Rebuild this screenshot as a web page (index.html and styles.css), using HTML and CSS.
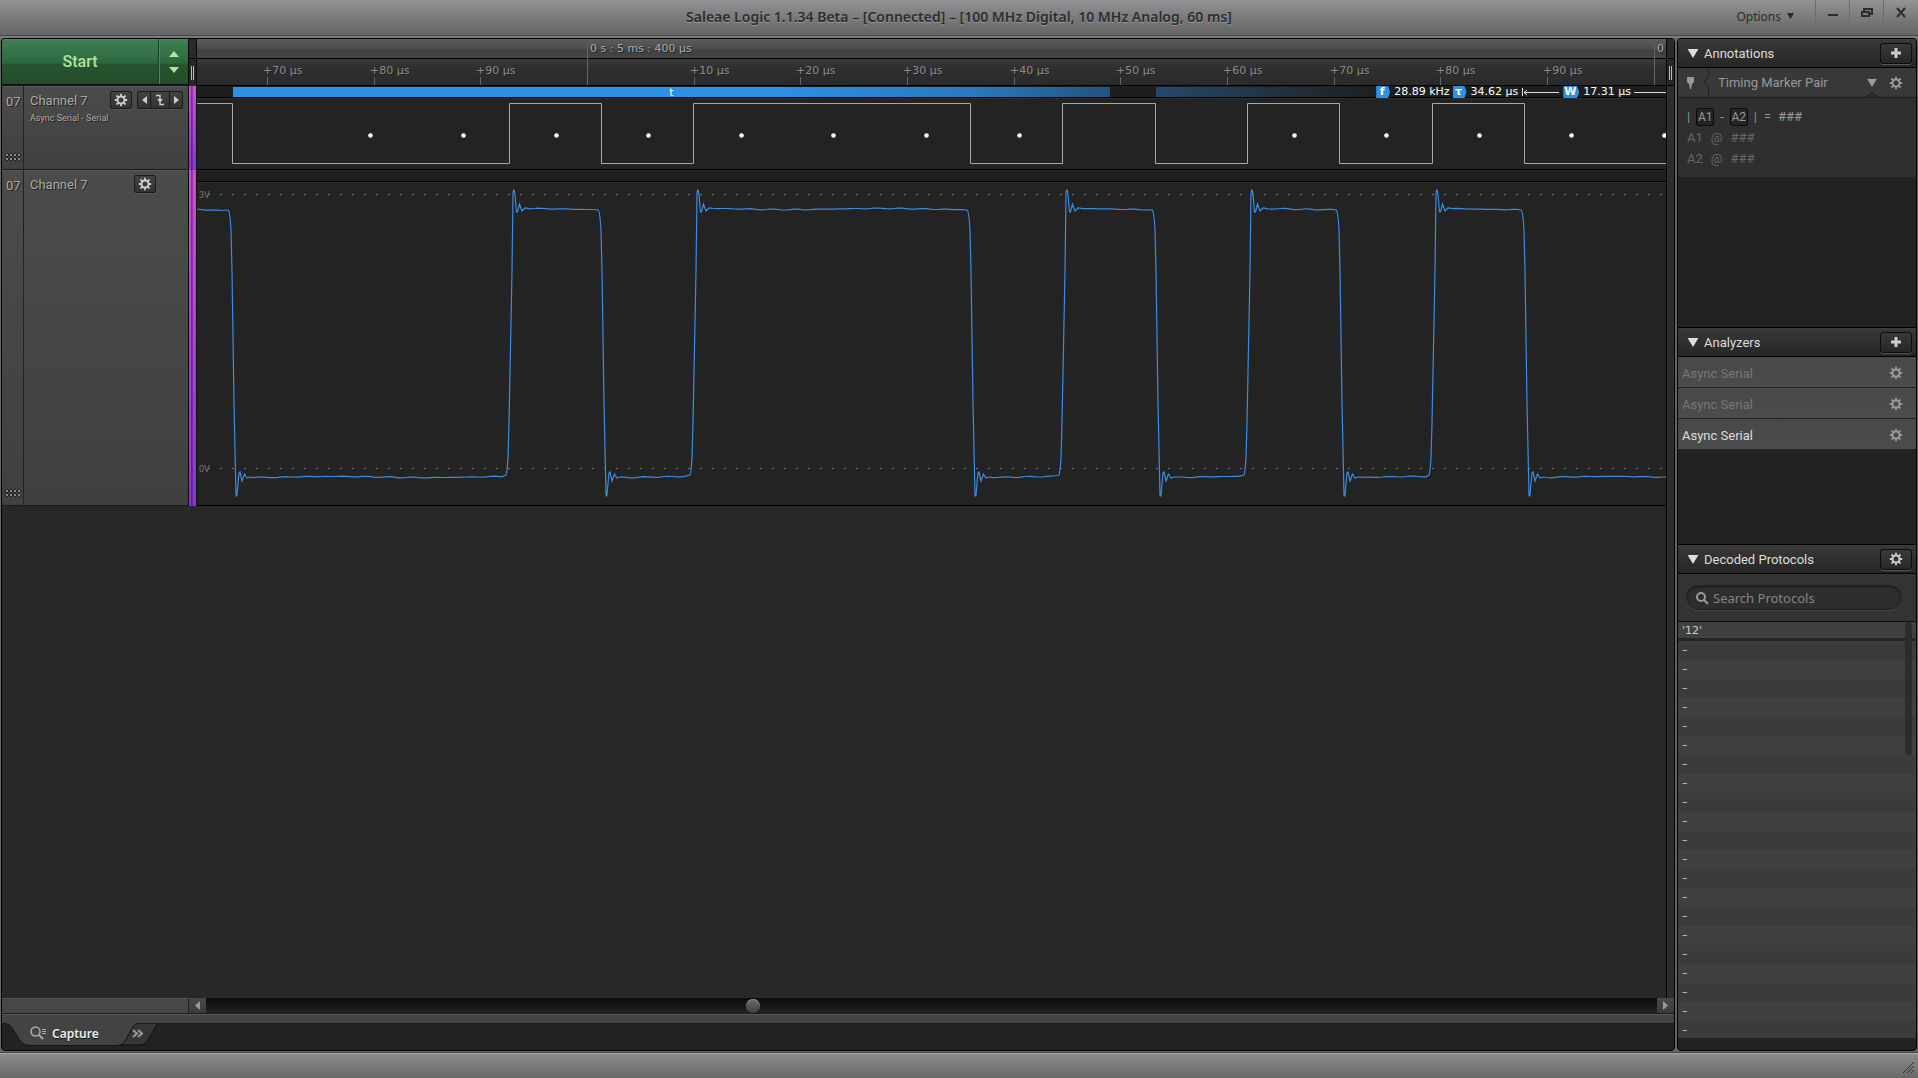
FILE: index.html
```html
<!DOCTYPE html>
<html lang="en">
<head>
  <meta charset="UTF-8">
  <title>Saleae Logic 1.1.34 Beta</title>
  <meta name="viewport" content="width=device-width, initial-scale=1">
  <link rel="stylesheet" href="styles.css">
</head>
<body>
  <svg class="defs" aria-hidden="true">
    <symbol id="gear" viewBox="0 0 14 14">
      <circle cx="7" cy="7" r="3.5" fill="none" stroke="currentColor" stroke-width="2"/>
      <path d="M7 .8v2.400M7 10.800v2.400M.8 7h2.400M10.800 7h2.400M2.500 2.500l1.800 1.800M9.700 9.700l1.800 1.800M11.500 2.500L9.700 4.300M4.300 9.700l-1.800 1.800" stroke="currentColor" stroke-width="1.800"/>
    </symbol>
    <symbol id="plus" viewBox="0 0 12 12">
      <path d="M6 1v10M1 6h10" stroke="currentColor" stroke-width="3"/>
    </symbol>
    <symbol id="down" viewBox="0 0 12 10">
      <path d="M0 0h12L6 10z" fill="currentColor"/>
    </symbol>
  </svg>

  <header class="titlebar">
    <h1>Saleae Logic 1.1.34 Beta – [Connected] – [100 MHz Digital, 10 MHz Analog, 60 ms]</h1>
    <div class="window-tools">
      <button class="options">Options <svg width="9" height="6"><use href="#down"/></svg></button>
      <button class="win-btn" aria-label="Minimize"><svg width="12" height="12"><path d="M1 7h10v2H1z" fill="currentColor"/></svg></button>
      <button class="win-btn" aria-label="Restore"><svg width="14" height="12" fill="none" stroke="currentColor" stroke-width="2"><path d="M4 4V2h8v5h-2M2 5h7v4H2z"/></svg></button>
      <button class="win-btn" aria-label="Close"><svg width="12" height="12" stroke="currentColor" stroke-width="2"><path d="M2 1l8 9M10 1L2 10"/></svg></button>
    </div>
  </header>

  <main>
    <section class="workspace">
      <div class="stage">
        <div class="tracks">
          <div class="track-head">
            <div class="start-group">
              <button class="start">Start</button>
              <button class="start-more" aria-label="Capture settings">
                <svg width="10" height="22" fill="currentColor"><path d="M0 6L5 0l5 6zM0 16h10l-5 6z"/></svg>
              </button>
            </div>
            <div class="divider head"></div>
            <svg class="ruler" id="ruler"></svg>
          </div>

          <div class="track digital">
            <div class="number">07<i class="grip"></i></div>
            <div class="channel">
              <div class="channel-top">
                <h2>Channel 7</h2>
                <button class="small-btn" aria-label="Channel settings"><svg width="14" height="14"><use href="#gear"/></svg></button>
                <div class="trigger">
                  <button aria-label="Previous edge"><svg width="5" height="8"><path d="M5 0v8L0 4z" fill="currentColor"/></svg></button>
                  <button aria-label="Trigger"><svg width="10" height="12"><path d="M1 1.500h4v9h4" fill="none" stroke="currentColor" stroke-width="1.300"/><path d="M2 5h6L5 8.500z" fill="currentColor"/></svg></button>
                  <button aria-label="Next edge"><svg width="5" height="8"><path d="M0 0v8l5-4z" fill="currentColor"/></svg></button>
                </div>
              </div>
              <p>Async Serial - Serial</p>
            </div>
            <div class="divider color"></div>
            <div class="lane">
              <div class="band">
                <span class="bubble full">t</span>
                <span class="bubble fade"></span>
                <div class="measure">
                  <b>f</b><span>28.89 kHz</span>
                  <b>τ</b><span>34.62 µs</span>
                  <svg class="arrow" width="38" height="10" stroke="#ddd" fill="none"><path d="M1.500 1v8M3 5.500h35M6 3L3 5.500 6 8"/></svg>
                  <b class="wide">W</b><span>17.31 µs</span>
                  <i></i>
                </div>
              </div>
              <svg class="plot" id="digital"></svg>
            </div>
          </div>

          <div class="track analog">
            <div class="number">07<i class="grip"></i></div>
            <div class="channel">
              <div class="channel-top">
                <h2>Channel 7</h2>
                <button class="small-btn far" aria-label="Channel settings"><svg width="14" height="14"><use href="#gear"/></svg></button>
              </div>
            </div>
            <div class="divider color"></div>
            <div class="lane">
              <div class="strip"></div>
              <svg class="plot" id="analog"></svg>
            </div>
          </div>
        </div>
        <div class="edge"><div class="edge-grip"></div></div>
      </div>

      <div class="hscroll">
        <div class="hscroll-pad"></div>
        <button aria-label="Scroll left"><svg width="5" height="9"><path d="M5 0v9L0 4.500z" fill="currentColor"/></svg></button>
        <input type="range" min="0" max="1000" value="376" aria-label="Time position">
        <button aria-label="Scroll right"><svg width="5" height="9"><path d="M0 0v9l5-4.500z" fill="currentColor"/></svg></button>
      </div>
      <div class="tab-strip"></div>
      <nav class="tabs">
        <svg class="tab-shape" width="160" height="26">
          <path d="M118 22q4-2 6-6l5-10q3-6 7-6h20l-10 17q-3 5-7 5z" fill="#353535" stroke="#0c0c0c"/>
          <path d="M0 0h1q7 0 10 6l6 10q4 6 9 6h90q5 0 8-6l5-9q3-7 9-7z" fill="#434343"/>
          <path d="M0 .5h1q7 0 10 6l6 10q4 6 9 6h90q5 0 8-6l5-9q3-7 7-7" fill="none" stroke="#141414"/>
        </svg>
        <button class="capture">
          <svg width="17" height="14" fill="none" stroke="#aaa"><circle cx="5.500" cy="5.500" r="4.500" stroke-width="1.500"/><path d="M9 9l4 4" stroke-width="2"/><path d="M12 3.500h4M12 5.500h4M12 7.500h4"/></svg>
          Capture
        </button>
        <button class="more" aria-label="More tabs"><svg width="12" height="9" fill="none" stroke="#999" stroke-width="2"><path d="M1 1l4 3.500L1 8M6 1l4 3.500L6 8"/></svg></button>
      </nav>
    </section>

    <aside class="sidebar">
      <section class="annotations">
        <div class="panel-head">
          <svg width="12" height="9"><use href="#down"/></svg>
          <h2>Annotations</h2>
          <button aria-label="Add annotation"><svg width="12" height="12"><use href="#plus"/></svg></button>
        </div>
        <div class="marker-head">
          <svg class="pin" width="8" height="13" fill="currentColor"><path d="M0 1h7v5L5 8 4 13H3L2 8 0 6z"/></svg>
          <svg class="notch" width="7" height="29" fill="none" stroke="#222"><path d="M5.500 0v9L1 14l4.500 5v10"/></svg>
          <span>Timing Marker Pair</span>
          <button aria-label="Marker menu"><svg width="10" height="8"><use href="#down"/></svg></button>
          <button aria-label="Marker settings"><svg width="14" height="14"><use href="#gear"/></svg></button>
          <svg class="caret" width="16" height="6"><path d="M1 5.500L8 1l7 4.500" fill="#2f2f2f" stroke="#1c1c1c"/></svg>
        </div>
        <div class="marker-body">
          <div class="formula"><em>|</em><kbd>A1</kbd><span>-</span><kbd>A2</kbd><em>|</em><span>=</span><span>###</span></div>
          <div class="at"><span>A1</span><span>@</span><span>###</span></div>
          <div class="at"><span>A2</span><span>@</span><span>###</span></div>
        </div>
      </section>

      <section class="analyzers">
        <div class="panel-head">
          <svg width="12" height="9"><use href="#down"/></svg>
          <h2>Analyzers</h2>
          <button aria-label="Add analyzer"><svg width="12" height="12"><use href="#plus"/></svg></button>
        </div>
        <ul>
          <li>Async Serial <button aria-label="Analyzer settings"><svg width="14" height="14"><use href="#gear"/></svg></button></li>
          <li>Async Serial <button aria-label="Analyzer settings"><svg width="14" height="14"><use href="#gear"/></svg></button></li>
          <li class="active">Async Serial <button aria-label="Analyzer settings"><svg width="14" height="14"><use href="#gear"/></svg></button></li>
        </ul>
      </section>

      <section class="decoded">
        <div class="panel-head">
          <svg width="12" height="9"><use href="#down"/></svg>
          <h2>Decoded Protocols</h2>
          <button aria-label="Protocol settings"><svg width="14" height="14"><use href="#gear"/></svg></button>
        </div>
        <div class="search">
          <label>
            <svg width="14" height="14" fill="none" stroke="#999" stroke-width="2"><circle cx="6" cy="6" r="4"/><path d="M9 9l4 4"/></svg>
            <input type="text" placeholder="Search Protocols" aria-label="Search Protocols">
          </label>
        </div>
        <ol class="results" id="results">
          <li class="first">'12'</li>
        </ol>
      </section>
    </aside>
  </main>

  <footer><svg width="12" height="12" stroke="#333" fill="none"><path d="M0 11L11 0M4 11l7-7M8 11l3-3"/></svg></footer>
  <script src="script.js"></script>
</body>
</html>
```
FILE: styles.css
```css
* {
  box-sizing: border-box;
}

body {
  margin: 0;
  height: 100vh;
  display: flex;
  flex-direction: column;
  overflow: hidden;
  background: #666;
  color: #aaa;
  font-family: Roboto, sans-serif;
  font-size: 13px;
}

h1, h2, p, ul, ol {
  margin: 0;
  padding: 0;
  font-weight: normal;
  list-style: none;
}

h2 {
  font-size: 13px;
}

button {
  display: flex;
  align-items: center;
  justify-content: center;
  margin: 0;
  padding: 0;
  border: none;
  background: none;
  color: inherit;
  font: inherit;
}

svg {
  flex: none;
}

.defs {
  position: absolute;
  width: 0;
  height: 0;
}

/* ---------- Title bar ---------- */

.titlebar {
  height: 38px;
  flex: none;
  display: grid;
  grid-template-columns: 1fr auto 1fr;
  background: linear-gradient(#939396, #838385 30%, #646464 35px, #484848 35px, #484848 36px, #7a7a7a 36px);
  color: #2c2c2c;
}

.titlebar h1 {
  grid-column: 2;
  font: 600 14px/34px "Noto Sans", sans-serif;
  text-shadow: 0 1px #999;
}

.window-tools {
  display: flex;
  justify-content: flex-end;
  padding-right: 1px;
}

.options {
  height: 32px;
  gap: 5px;
  margin-right: 20px;
  font: 12px "Noto Sans", sans-serif;
}

.win-btn {
  width: 34px;
  height: 26px;
  border-left: 1px solid #6c6c6c;
}

/* ---------- Workspace ---------- */

main {
  flex: 1;
  display: flex;
  gap: 2px;
  padding: 0 1px;
  min-height: 0;
}

.workspace, .sidebar {
  border: 1px solid #000;
  border-radius: 4px;
  overflow: hidden;
  background: #282828;
}

.workspace {
  flex: 1;
  min-width: 0;
  display: flex;
  flex-direction: column;
}

.stage {
  flex: 1;
  display: flex;
  min-height: 0;
}

.tracks {
  flex: 1;
  min-width: 0;
}

.track-head, .track {
  display: flex;
}

.track-head {
  height: 47px;
}

.start-group {
  width: 186px;
  display: flex;
  border-bottom: 2px solid #151515;
  background: linear-gradient(#48935f, #3b7e50 2px, #2d683f 24px, #27552f 25px, #234a2c);
  color: #aee59f;
}

.start {
  flex: 1;
  font-size: 16px;
  font-weight: 500;
}

.start-more {
  width: 30px;
  border-left: 1px solid #1b3f25;
  box-shadow: inset 1px 0 #4a8a5c;
}

.divider {
  width: 9px;
  border: 1px solid #0a0a0a;
  border-width: 0 1px;
}

.divider.head, .edge-grip {
  background:
    linear-gradient(90deg, #bbb 1px, transparent 1px, transparent 2px, #bbb 2px) 2px 27px / 3px 14px no-repeat,
    linear-gradient(#2a2a2a 19px, #000 19px, #000 20px, #262626 20px);
}

.divider.color {
  background:
    linear-gradient(90deg, transparent 2px, #0006 2px, #0003 4px, transparent 4px),
    linear-gradient(#cc4fd6, #8a35d6);
  border-right-color: #111;
}

.ruler {
  flex: 1;
  min-width: 0;
  height: 47px;
  background: linear-gradient(#5c5c5c, #4c4c4c 10px, #414141 11px, #444 19px, #000 19px, #000 20px, #393939 20px, #303030 28px, #2a2a2a 46px, #000 46px);
}

.ruler text, .band, .results {
  font-family: "DejaVu Sans", sans-serif;
  font-size: 11px;
}

.ruler text {
  text-shadow: 1px 1px #222;
}

.number {
  position: relative;
  width: 22px;
  padding: 8px 0 0 4px;
  border-right: 1px solid #222;
}

.grip {
  position: absolute;
  left: 3px;
  bottom: 8px;
  width: 16px;
  height: 8px;
  background: radial-gradient(circle, #8a8a8a 1px, #242424 1px, #242424 2px, transparent 2px) 0 0 / 4px 4px;
}

.digital {
  height: 84px;
}

.analog {
  height: 336px;
}

.track .number, .track .channel {
  background: linear-gradient(#4b4b4b, #404040);
  border-bottom: 1px solid #1a1a1a;
  box-shadow: inset 0 1px #5a5a5a;
  text-shadow: 1px 1px #222;
}

.channel {
  width: 164px;
  padding: 5px 5px 0 6px;
}

.channel-top {
  display: flex;
  height: 18px;
  align-items: center;
}

.channel h2 {
  flex: 1;
}

.channel p {
  margin-top: 4px;
  font-size: 9px;
  line-height: 11px;
}

.small-btn, .trigger, .panel-head button {
  border: 1px solid #1b1b1b;
  border-radius: 2px;
  background: linear-gradient(#424242, #333);
  box-shadow: 0 1px #555;
  color: #ccc;
}

.small-btn {
  width: 22px;
  height: 18px;
}

.small-btn.far {
  margin-right: 27px;
}

.trigger {
  display: flex;
  width: 46px;
  height: 18px;
  margin-left: 5px;
}

.trigger button {
  width: 12px;
}

.trigger button:nth-child(2) {
  flex: 1;
  border: 1px solid #1b1b1b;
  border-width: 0 1px;
}

.lane {
  flex: 1;
  min-width: 0;
  display: flex;
  flex-direction: column;
  background: #232323;
  border-bottom: 1px solid #000;
}

.plot {
  flex: 1;
  width: 100%;
  min-height: 0;
  border-top: 1px solid #2e2e2e;
}

.band {
  position: relative;
  display: flex;
  gap: 46px;
  height: 12px;
  padding: 1px 0 0 36px;
  border-bottom: 1px solid #000;
  background: #1e1e1e;
  color: #fff;
  line-height: 11px;
}

.bubble {
  text-align: center;
  flex: none;
}

.bubble.full {
  width: 877px;
  background: linear-gradient(90deg, #2c90e6 62%, #2778be 85%, #24527c);
}

.bubble.fade {
  width: 223px;
  background: linear-gradient(90deg, #25496a, #1e1e1e);
}

/* readout sits over the lane, pinned to its right edge */
.measure {
  position: absolute;
  top: 0;
  right: 0;
  height: 12px;
  display: flex;
  align-items: center;
}

.measure b {
  width: 14px;
  height: 12px;
  padding-right: 2px;
  margin-right: 4px;
  background: #2c90e6;
  clip-path: polygon(0 0, 85% 0, 100% 50%, 85% 100%, 0 100%);
  line-height: 12px;
  text-align: center;
}

.measure span {
  margin-right: 3px;
  line-height: 12px;
}

.measure b.wide {
  width: 16px;
}

.measure .arrow {
  margin-right: 4px;
}

.measure i {
  width: 32px;
  height: 1px;
  background: #ddd;
}

.strip {
  height: 12px;
  border-top: 1px solid #2a2a2a;
  border-bottom: 1px solid #000;
  background: #1e1e1e;
}

.axis {
  fill: #777;
  font-size: 9px;
}

.edge {
  width: 8px;
  border-left: 1px solid #000;
  background: #2d2d2d;
}

.edge-grip {
  height: 47px;
  border-bottom: 1px solid #000;
}

/* ---------- Scrollbar and tabs ---------- */

.hscroll {
  display: flex;
  height: 15px;
}

.hscroll-pad {
  width: 187px;
  background: #474747;
  border-top: 1px solid #555;
  border-right: 1px solid #222;
}

.hscroll button {
  width: 17px;
  background: linear-gradient(#484848, #3a3a3a);
  color: #999;
}

.hscroll input {
  flex: 1;
  min-width: 0;
  margin: 0;
  appearance: none;
  background: linear-gradient(#0c0c0c, #222);
}

.hscroll input::-webkit-slider-thumb {
  appearance: none;
  width: 14px;
  height: 14px;
  border-radius: 50%;
  background: linear-gradient(#6c6c6c, #3e3e3e);
  box-shadow: inset 0 1px #888;
}

.tab-strip {
  height: 10px;
  background: #444;
  border-top: 1px solid #1c1c1c;
  box-shadow: inset 0 1px #5a5a5a;
}

.tabs {
  position: relative;
  display: flex;
  height: 27px;
  background: #222;
}

.tab-shape {
  position: absolute;
  left: 0;
  top: 0;
}

.tabs button {
  position: relative;
  height: 20px;
}

.capture {
  gap: 5px;
  margin: 0 33px 0 28px;
  color: #eee;
  font: 600 12px "Noto Sans", sans-serif;
  text-shadow: 0 1px #111;
}

/* ---------- Sidebar ---------- */

.sidebar {
  width: 240px;
  display: flex;
  flex-direction: column;
  background: #222;
}

.annotations {
  height: 288px;
}

.analyzers {
  height: 217px;
}

.panel-head {
  display: flex;
  align-items: center;
  height: 29px;
  padding: 0 4px 0 9px;
  border-bottom: 1px solid #000;
  background: linear-gradient(#444, #383838 1px, #262626);
  color: #ddd;
}

.analyzers .panel-head, .decoded .panel-head {
  height: 30px;
  border-top: 1px solid #000;
}

.panel-head h2 {
  flex: 1;
  margin-left: 5px;
}

.panel-head button {
  width: 32px;
  height: 21px;
  border-color: #0c0c0c;
  border-radius: 3px;
  background: linear-gradient(#3a3a3a, #262626);
}

.marker-head {
  position: relative;
  display: flex;
  align-items: center;
  height: 30px;
  padding: 0 13px 0 9px;
  background: #383838;
  border-bottom: 1px solid #1c1c1c;
  color: #999;
}

.notch {
  margin: 0 8px;
}

.marker-head span {
  flex: 1;
}

.marker-head button + button {
  margin-left: 12px;
}

.caret {
  position: absolute;
  right: 36px;
  bottom: -1px;
}

.marker-body {
  height: 79px;
  padding: 8px 9px;
  background: #2f2f2f;
  line-height: 21px;
}

.formula, .at {
  display: flex;
  height: 21px;
  align-items: center;
  color: #666;
}

.formula {
  gap: 7px;
  color: #999;
}

.formula em {
  font-style: normal;
  color: #7c9a78;
}

.formula kbd {
  width: 18px;
  height: 18px;
  margin: 0 -1px;
  border: 1px solid #0a0a0a;
  border-radius: 2px;
  background: #252525;
  font: 12px/16px Roboto, sans-serif;
  text-align: center;
}

.at {
  gap: 8px;
}

.analyzers li {
  display: flex;
  align-items: center;
  justify-content: space-between;
  height: 31px;
  padding: 2px 13px 0 4px;
  border-bottom: 1px solid #222;
  background: linear-gradient(#484848, #4c4c4c);
  color: #777;
}

.analyzers li.active {
  color: #ddd;
}

.analyzers li button {
  color: #999;
}

.decoded {
  flex: 1;
  display: flex;
  flex-direction: column;
}

.search {
  height: 48px;
  padding: 11px 14px 0 8px;
  background: #333;
  border-bottom: 1px solid #111;
}

.search label {
  display: flex;
  align-items: center;
  height: 25px;
  padding-left: 8px;
  gap: 4px;
  border: 1px solid #222;
  border-radius: 13px;
  background: #2d2d2d;
  box-shadow: inset 0 1px 2px #1a1a1a, 0 1px #444;
}

.search input {
  flex: 1;
  min-width: 0;
  padding: 0;
  border: none;
  outline: none;
  background: none;
  color: #ccc;
  font: 13px "Noto Sans", sans-serif;
}

.search input::placeholder {
  color: #858585;
}

.results {
  position: relative;
  color: #ccc;
}

.results li {
  height: 19px;
  padding-left: 4px;
  line-height: 18px;
  background: #404040;
}

.results li:nth-child(even) {
  background: #3b3b3b;
}

.results li.first {
  border-bottom: 3px solid #252525;
}

.results li:last-child {
  height: 17px;
}

.results::after {
  content: "";
  position: absolute;
  top: 0;
  right: 4px;
  width: 7px;
  height: 133px;
  border-radius: 3px;
  background: #2c2c2c;
}

/* ---------- Status bar ---------- */

footer {
  display: flex;
  flex: none;
  justify-content: flex-end;
  align-items: flex-end;
  height: 25px;
  margin-top: 2px;
  padding: 0 3px 4px 0;
  border-top: 1px solid #a5a5a5;
  background: linear-gradient(#8c8c8e, #686868);
  box-shadow: 0 -1px #444;
}
```
FILE: script.js
```javascript
// time ruler: one tick every 10 µs
var ruler = '';
for (var i = -3; i <= 10; i++) {
  var x = Math.round(390 + i * 106.65) + 0.5;
  if (i % 10 === 0) {
    ruler += '<path d="M' + x + ' 6V46" stroke="#666"/>';
    ruler += '<text x="' + (x + 2.5) + '" y="13" fill="#aaa">' + (i === 0 ? '0 s : 5 ms : 400 µs' : '0') + '</text>';
  } else {
    ruler += '<path d="M' + x + ' 38V46" stroke="#666"/>';
    ruler += '<text x="' + (x - 4.5) + '" y="35" fill="#8c8c8c">+' + ((i + 10) % 10) * 10 + ' µs</text>';
  }
}
document.getElementById('ruler').innerHTML = ruler;

// signal edges, starting from a high level
var edges = [35, 312, 404, 496, 773, 865, 958, 1050, 1142, 1235, 1327];
var dots = [173, 266, 359, 451, 544, 636, 729, 822, 1097, 1189, 1282, 1374, 1467];

var d = 'M0 4.5';
edges.forEach(function (e, n) {
  d += 'H' + (e + 0.5) + 'V' + (n % 2 ? 4.5 : 64.5);
});
d += 'H4000';
var digital = '<path d="' + d + '" fill="none" stroke="#a8a8a8"/>';
dots.forEach(function (x) {
  digital += '<circle cx="' + (x + 0.5) + '" cy="36.5" r="2.3" fill="#fff"/>';
});
document.getElementById('digital').innerHTML = digital;

// analog trace with ringing after each edge
function hum(from, to, level) {
  var s = '';
  for (var x = from; x < to; x += 4) {
    s += 'L' + x + ' ' + (level + Math.sin(x / 29) * 0.6 + Math.sin(x / 3.7) * Math.sin(x / 41) * 0.5).toFixed(1);
  }
  return s;
}

var high = 26, low = 294;
var a = 'M0 ' + high + hum(8, 28, 27);
edges.forEach(function (edge, n) {
  var e = n ? edge + 1 : edge;
  var next = edges[n + 1] || 1480;
  if (n % 2 === 0) {
    a += 'L' + (e - 4) + ' 27Q' + (e - 2) + ' 28 ' + (e - 1) + ' 48L' + e + ' 88L' + (e + 2) + ' 220L' + (e + 4) + ' 312'
      + 'Q' + (e + 5) + ' 316 ' + (e + 5.5) + ' 306L' + (e + 7) + ' 290L' + (e + 8) + ' 289L' + (e + 10) + ' 298L' + (e + 12.5) + ' 291L' + (e + 15) + ' 295L' + (e + 18) + ' 294'
      + hum(e + 22, next - 5, low);
  } else {
    a += 'L' + (e - 4) + ' 292Q' + (e - 3) + ' 290 ' + (e - 2) + ' 275L' + (e - 1) + ' 240L' + (e + 2) + ' 88L' + (e + 3) + ' 10'
      + 'Q' + (e + 4) + ' 3 ' + (e + 5) + ' 12L' + (e + 6.5) + ' 29L' + (e + 7.5) + ' 29L' + (e + 9.5) + ' 21L' + (e + 12) + ' 28L' + (e + 15) + ' 25'
      + hum(e + 20, next - 5, high);
  }
});
document.getElementById('analog').innerHTML =
  '<path d="M11 11.5H4000M11 285.5H4000" stroke="#777" stroke-dasharray="2 10"/>' +
  '<text class="axis" x="2" y="15">3V</text><text class="axis" x="2" y="289">0V</text>' +
  '<path d="' + a + '" fill="none" stroke="#3b8be0" stroke-width="1.2"/>';

// decoded rows without a value
var results = document.getElementById('results');
for (var r = 0; r < 21; r++) {
  var li = document.createElement('li');
  li.textContent = '–';
  results.appendChild(li);
}
```
